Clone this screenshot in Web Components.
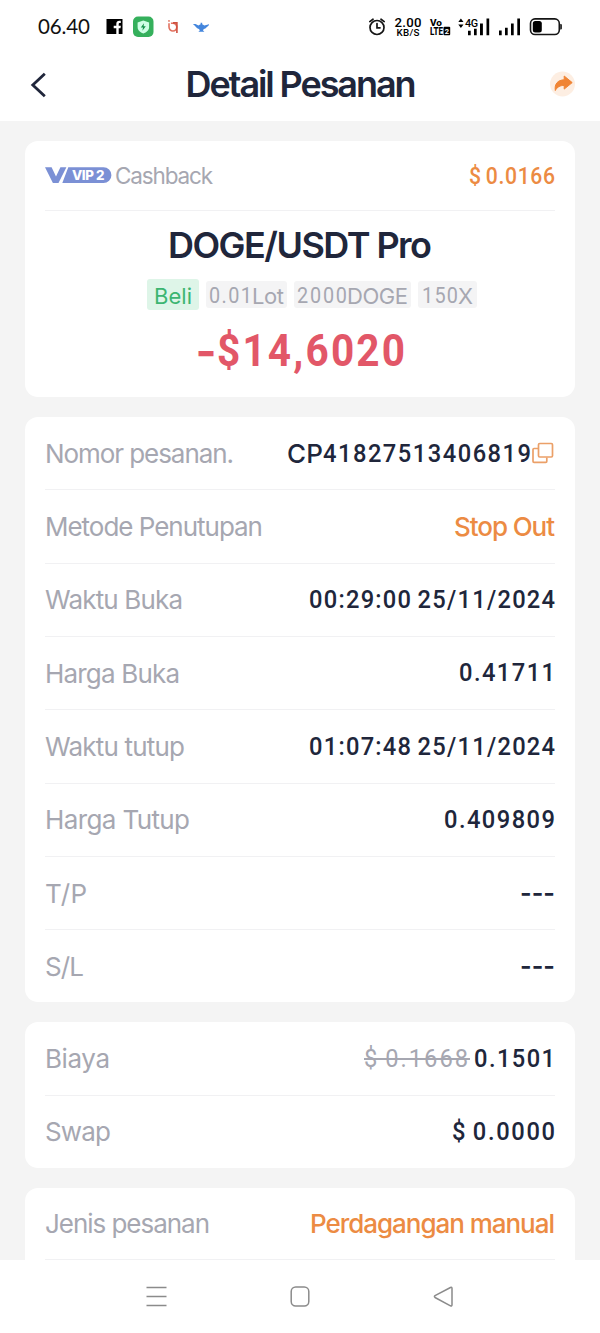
<!DOCTYPE html>
<html lang="id">
<head>
<meta charset="utf-8">
<title>Detail Pesanan</title>
<style>
html,body{margin:0;padding:0}
body{background:#f4f4f4;font-family:Inter,"Liberation Sans",sans-serif;color:#20263b;width:600px;height:1333px;overflow:hidden}
</style>
</head>
<body>
<order-page></order-page>
<script>
const define=(name,html,extra)=>customElements.define(name,class extends HTMLElement{
  connectedCallback(){
    if(this.shadowRoot)return;
    this.attachShadow({mode:'open'}).innerHTML=html;
    if(extra)extra(this);
  }
});

/* Text run whose tracking is adjusted so that it takes up exactly `w` pixels.
   Numeric runs use narrowed digits with wider tracking. */
define('fit-text',`<style>
:host{display:inline-block;white-space:pre;font-weight:400;line-height:1.2}
:host([num]){font-family:Roboto,Inter,sans-serif;word-spacing:-2px}
span{display:inline-block;transform-origin:0 50%}
:host([strike]) span{text-decoration:line-through;text-decoration-thickness:1.500px}
</style><span><slot></slot></span>`,el=>{
  const s=el.shadowRoot.querySelector('span');
  const n=[...el.textContent].length,w=+el.getAttribute('w');
  if(!w||n<2)return;
  const k=el.hasAttribute('num')?.9:1;
  const gap=(w/k-s.getBoundingClientRect().width)/(n-1);
  s.style.letterSpacing=gap+'px';
  s.style.marginRight=(w-w/k-gap)+'px';
  if(k!==1)s.style.transform='scaleX('+k+')';
});

define('status-bar',`<style>
:host{display:flex;height:54px;padding:0 36px 0 38px;align-items:center;justify-content:space-between;color:#111}
div{display:flex;align-items:center}
fit-text{font-family:Lato,sans-serif;font-size:20.5px;margin-top:-1px}
svg{display:block}
div svg{margin-left:9px}
text{font-family:Roboto,sans-serif}
</style>
<div><fit-text w="52">06.40</fit-text>
<svg width="110" height="28" viewBox="99 13 110 28">
 <rect x="106.500" y="19" width="16" height="15" fill="#000"/>
 <path d="M116.300 34v-5.700h-2.600v-2.500h2.600v-1.800c0-2.200 1.200-3.300 3-3.300h1.500v2.200h-1c-.8 0-1.100.4-1.100 1.200v1.700h2.200l-.4 2.500h-1.800V34z" fill="#fff"/>
 <rect x="133" y="16.500" width="20.500" height="20.500" rx="5" fill="#35b05c"/>
 <path d="M143.300 20.500l5.800 2v4.500c0 3.300-2.600 5.400-5.800 6.600-3.200-1.200-5.700-3.300-5.700-6.600v-4.500z" fill="#cfffe5"/>
 <path d="M144 23.300l-3.200 4.200h2.200l-.6 3.200 3.400-4.400h-2.200z" fill="#16924a"/>
 <g fill="none" stroke-width="1.600"><path d="M169 23.200v3.900a3.900 3.900 0 1 0 3.900-3.900h-2" stroke="#e2715f"/><path d="M173 22.900h3.900v10" stroke="#cf5140"/></g><circle cx="169" cy="20.900" r=".9" fill="#e2715f"/>
 <path d="M193 24.200c2.300-.5 4 .4 5.300 1.300l2.300-1.300v-1.500h1.600v1.500l2.200 1.200 6-1.500c-2.400 1.400-3.700 4.200-6.500 5.200l-1 1.100 1.500 1.500h-6l1.500-1.500-1-1.100c-2.600-.6-3.400-3.300-5.900-4.900z" fill="#4486dd"/>
</svg></div>
<svg width="200" height="34" viewBox="364 10 200 34">
 <g fill="none" stroke="#151515" stroke-width="1.700" stroke-linecap="round"><circle cx="377" cy="27.500" r="7"/><path d="M377 23.500v4.300h3M369.800 21.600l3.200-2.400M384.200 21.600l-3.200-2.400"/></g>
 <text x="394.500" y="26.500" font-size="13.200" font-weight="500" textLength="27">2.00</text>
 <text x="396.500" y="36" font-size="9.800" font-weight="500" textLength="23">KB/S</text>
 <text x="430" y="25.700" font-size="9.600" font-weight="800" textLength="12" lengthAdjust="spacingAndGlyphs">Vo</text>
 <text x="430" y="35.400" font-size="10" font-weight="800" textLength="13" lengthAdjust="spacingAndGlyphs">LTE</text>
 <rect x="443.500" y="26.800" width="6.700" height="8.400" rx="1"/>
 <text x="444.800" y="33.800" font-size="7.500" font-weight="700" style="fill:#fff">2</text>
 <path d="M458.300 22l2.600-3.400 2.600 3.400zM458.300 24.500l2.600 3.400 2.600-3.400z"/>
 <text x="465" y="26.600" font-size="10.800" font-weight="500" textLength="13">4G</text>
 <path d="M468 30.800h2.700v4.400H468zM474 28.800h2.700v6.400H474zM480 23.500h2.900v11.700H480zM486.500 18.500h2.700v16.700h-2.700zM499 30.500h2.700v4.700H499zM505 27.800h2.700v7.400H505zM511 23.500h2.700v11.700H511zM517.300 18.500h2.700v16.700h-2.700z"/>
 <rect x="530.500" y="18.900" width="28.800" height="15.600" rx="4.500" fill="none" stroke="#151515" stroke-width="1.600"/>
 <rect x="532.800" y="21" width="9" height="11.400" rx="2.500"/><path d="M560.300 24h.5q1 0 1 1v3.500q0 1-1 1h-.5z"/>
</svg>`);

define('title-bar',`<style>
:host{display:flex;height:67px;padding:0 24px 0 29px;align-items:center;justify-content:space-between}
svg{display:block;width:20px;height:28px;margin-top:-6px}
svg.share{width:26px;height:26px;margin-top:-8px}
h1{margin:-7px 0 0 3px;font-size:36px;line-height:44px;font-weight:600}
fit-text{font-weight:600}
</style>
<svg viewBox="29 71 20 28" fill="none" stroke="#20263b" stroke-width="2.800"><path d="M44.800 73.800L32.800 85l12 11.200"/></svg>
<h1><fit-text w="231">Detail Pesanan</fit-text></h1>
<svg class="share" viewBox="550 71 26 26"><circle cx="562.500" cy="84" r="12.500" fill="#fdeee2"/><path d="M564.200 76l8 6.600-8 6.500v-3.600c-3.800-.2-7 1.300-8.900 5-1-6.400 2.400-10.500 8.900-10.700z" fill="#f08434" stroke="#f08434" stroke-linejoin="round"/></svg>`);

define('surface-card',`<style>
:host{display:block;background:#fff;border-radius:13px;padding:0 20px}
</style><slot></slot>`);

define('detail-row',`<style>
:host{display:flex;box-sizing:border-box;height:73.3px;align-items:center;justify-content:space-between;border-bottom:1px solid #f1f1f3;font-size:26px}
:host([last]){height:72px;border-bottom:0}
.label{color:#a6a7b1}
.value{display:flex;align-items:center}
</style><span class="label"><slot name="label"></slot></span><span class="value"><slot></slot></span>`);

define('order-tag',`<style>
:host{display:flex;box-sizing:border-box;height:27px;align-items:center;justify-content:center;background:#f4f4f5;border-radius:3px;color:#a6a7b1;font-size:22px;padding-top:2px}
:host([side]){height:31px;background:#def5e8;color:#3cb571}
</style><slot></slot>`);

define('vip-badge',`<style>
:host{display:block;width:67px;height:17px}
svg{display:block}
</style><svg width="67" height="17" viewBox="45 167 67 17"><path d="M45 167.300h6.600l4.400 9.200 4.400-9.200h6L58.500 183h-5.600zM68.300 167.300H103.500a7.900 7.900 0 0 1 0 15.800H62.300z" fill="#7b90d5"/><text x="72" y="180" font-family="Inter" font-weight="800" font-size="13.300" fill="#fff" textLength="32.500">VIP 2</text></svg>`);

define('order-summary',`<style>
:host{display:flex;flex-direction:column;height:256px}
.cash{display:flex;align-items:center;justify-content:space-between;box-sizing:border-box;height:70px;border-bottom:1px solid #f1f1f3;font-size:22.500px}
.cash div{display:flex;align-items:center;gap:3px;color:#a6a7b1}
.cash .amt{font-size:23.500px;color:#ec8b43;font-weight:500}
.pair{align-self:center;font-size:36px;line-height:44px;margin-top:12px}
.pair fit-text{font-weight:600}
.tags{display:flex;align-items:center;gap:7px;margin:12px 0 0 102px}
.loss{display:flex;align-self:center;align-items:center;font-size:45px;color:#e25768;line-height:54px;margin-top:14px}
.loss fit-text{font-weight:700}
</style>
<div class="cash"><div><vip-badge></vip-badge><fit-text w="98">Cashback</fit-text></div><fit-text class="amt" num w="86">$ 0.0166</fit-text></div>
<div class="pair"><fit-text w="264">DOGE/USDT Pro</fit-text></div>
<div class="tags">
<order-tag side style="width:52px"><fit-text w="38">Beli</fit-text></order-tag>
<order-tag style="width:81px"><fit-text num w="43">0.01</fit-text><fit-text w="32">Lot</fit-text></order-tag>
<order-tag style="width:117px"><fit-text num w="50">2000</fit-text><fit-text w="61">DOGE</fit-text></order-tag>
<order-tag style="width:59px"><fit-text num w="36">150</fit-text><fit-text>X</fit-text></order-tag>
</div>
<div class="loss"><fit-text>-</fit-text><fit-text num w="188">$14,6020</fit-text></div>`);

define('copy-icon',`<style>:host{display:block;width:22px;height:22px;margin-left:1px;margin-right:1px}svg{display:block}</style>
<svg width="22" height="22" viewBox="532 443 22 22" fill="none" stroke="#eba068" stroke-width="1.700" stroke-linejoin="round"><rect x="538.500" y="444.500" width="14" height="13.500" rx="1.200"/><path d="M538 449.500h-4q-1 0-1 1V462.300q0 1 1 1h11.800q1 0 1-1v-3.800"/></svg>`);

define('nav-bar',`<style>
:host{display:flex;height:73px;background:#fff;align-items:center;justify-content:space-between;padding:0 145px}
svg{display:block;width:23px;height:24px;fill:none;stroke:#8b8b8b;stroke-width:1.500;stroke-linejoin:round}
</style>
<svg viewBox="0 0 23 24"><path d="M1.500 2.500h20M1.500 11.500h20M1.500 20.500h20"/></svg>
<svg viewBox="0 0 23 24"><rect x="2.200" y="2" width="17.600" height="19" rx="4.500"/></svg>
<svg viewBox="0 0 23 24"><path d="M18.500 2.500q1.500-.6 1.500 1v16.300q0 1.600-1.500 1L3 12.500q-1.200-.9 0-1.800z"/></svg>`);

define('order-page',`<style>
:host{display:flex;flex-direction:column;height:1333px;overflow:hidden;background:#f4f4f4}
header{background:#fff;flex:none}
main{flex:1;min-height:0;overflow:hidden;box-sizing:border-box;padding:20.200px 25px 0;display:flex;flex-direction:column;gap:20px}
surface-card{flex:none}
nav-bar{flex:none}
detail-row [num]{font-weight:500;font-size:26.300px}
.dark{font-weight:500}
.orange{color:#ec8b43;font-weight:500}
.dash{font-weight:600;font-size:25px}
.old{color:#a6a7b1;margin-right:6px}
</style>
<header><status-bar></status-bar><title-bar></title-bar></header>
<main>
<surface-card><order-summary></order-summary></surface-card>
<surface-card>
<detail-row><fit-text slot="label" w="189">Nomor pesanan.</fit-text><fit-text class="dark" w="36">CP</fit-text><fit-text num w="208">41827513406819</fit-text><copy-icon></copy-icon></detail-row>
<detail-row><fit-text slot="label" w="218">Metode Penutupan</fit-text><fit-text class="orange" w="101">Stop Out</fit-text></detail-row>
<detail-row><fit-text slot="label" w="138">Waktu Buka</fit-text><fit-text num w="246">00:29:00 25/11/2024</fit-text></detail-row>
<detail-row><fit-text slot="label" w="135">Harga Buka</fit-text><fit-text num w="96">0.41711</fit-text></detail-row>
<detail-row><fit-text slot="label" w="140">Waktu tutup</fit-text><fit-text num w="246">01:07:48 25/11/2024</fit-text></detail-row>
<detail-row><fit-text slot="label" w="145">Harga Tutup</fit-text><fit-text num w="111">0.409809</fit-text></detail-row>
<detail-row><fit-text slot="label" w="42">T/P</fit-text><fit-text class="dash" w="35">---</fit-text></detail-row>
<detail-row last><fit-text slot="label" w="39">S/L</fit-text><fit-text class="dash" w="35">---</fit-text></detail-row>
</surface-card>
<surface-card>
<detail-row><fit-text slot="label" w="65">Biaya</fit-text><fit-text class="old" num strike w="104" style="font-weight:400">$ 0.1668</fit-text><fit-text num w="81">0.1501</fit-text></detail-row>
<detail-row last><fit-text slot="label" w="66">Swap</fit-text><fit-text num w="103">$ 0.0000</fit-text></detail-row>
</surface-card>
<surface-card>
<detail-row style="height:72.700px"><fit-text slot="label" w="165">Jenis pesanan</fit-text><fit-text class="orange" w="245">Perdagangan manual</fit-text></detail-row>
<detail-row></detail-row>
</surface-card>
</main>
<nav-bar></nav-bar>`);
</script>
</body>
</html>
